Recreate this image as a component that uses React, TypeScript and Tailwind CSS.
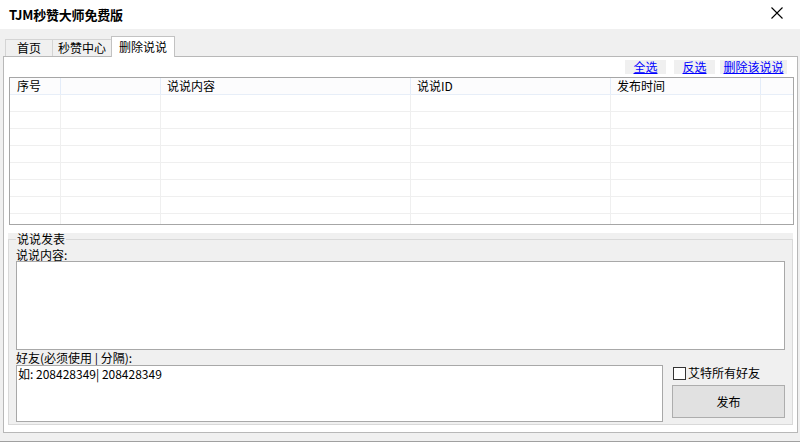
import React from 'react'

const font = { fontFamily: '"Noto Sans CJK SC", "Liberation Sans", sans-serif' }

const rows = Array.from({ length: 8 })

function Cell({ last }: { last?: boolean }) {
  return <div className={last ? '' : 'border-r border-[#efefef]'} />
}

export default function App() {
  return (
    <div className="w-[800px] h-[442px] bg-[#f0f0f0] text-[12px] leading-[14px] text-black overflow-hidden" style={font}>
      {/* title bar */}
      <div className="h-[29px] bg-white flex items-center justify-between pl-[9px] pr-[17px]">
        <span className="text-[13px] font-bold tracking-[-0.2px]">TJM秒赞大师免费版</span>
        <svg width="12" height="12" viewBox="0 0 12 12" className="mb-[4px]">
          <path d="M0.5 0.5 L11.5 11.5 M11.5 0.5 L0.5 11.5" stroke="#000" strokeWidth="1.1" />
        </svg>
      </div>

      <div className="pt-[7px] pl-[3px] pr-[2px]">
        {/* tabs */}
        <div className="flex items-end h-[20px] pl-[2px]">
          <div className="w-[48px] h-[17px] border border-b-0 border-[#d4d4d4] bg-[#f0f0f0] flex items-center justify-center">首页</div>
          <div className="w-[59px] h-[17px] border border-b-0 border-l-0 border-[#d4d4d4] bg-[#f0f0f0] flex items-center justify-center">秒赞中心</div>
          <div className="relative z-10 -ml-[1px] -mb-[1px] w-[64px] h-[21px] border border-b-0 border-[#c2c2c2] bg-white flex items-center justify-center pb-[1px]">删除说说</div>
        </div>

        {/* panel */}
        <div className="h-[377px] border border-[#b8b8b8] bg-white">
          <div className="h-[20px] flex justify-end items-start pt-[3px] pr-[10px] gap-[8px]">
            <a className="w-[41px] h-[14px] bg-[#f0f0f0] text-[#0000ff] underline flex justify-center">全选</a>
            <a className="w-[41px] h-[14px] bg-[#f0f0f0] text-[#0000ff] underline flex justify-center">反选</a>
            <a className="-ml-[3px] w-[67px] h-[14px] bg-[#f0f0f0] text-[#0000ff] underline flex justify-center">删除该说说</a>
          </div>

          {/* list */}
          <div className="ml-[5px] w-[785px] h-[148px] border border-[#a6a6a6] overflow-hidden">
            <div className="grid grid-cols-[51px_100px_250px_200px_150px_1fr] h-[17px] bg-[#fcfcfd] border-b border-[#e7eef8]">
              <div className="pl-[7px] pt-[1px] border-r border-[#e3ecf9]">序号</div>
              <div className="border-r border-[#e3ecf9]" />
              <div className="pl-[6px] pt-[1px] border-r border-[#e3ecf9]">说说内容</div>
              <div className="pl-[6px] pt-[1px] border-r border-[#e3ecf9]">说说ID</div>
              <div className="pl-[6px] pt-[1px] border-r border-[#e3ecf9]">发布时间</div>
              <div />
            </div>
            {rows.map((_, i) => (
              <div key={i} className="grid grid-cols-[51px_100px_250px_200px_150px_1fr] h-[17px] border-b border-[#efefef]">
                <Cell />
                <Cell />
                <Cell />
                <Cell />
                <Cell />
                <Cell last />
              </div>
            ))}
          </div>

          {/* group box */}
          <div className="relative mt-[8px] ml-[4px] w-[785px] h-[192px] bg-[#f0f0f0] pt-[6px]">
            <span className="absolute left-[8px] top-0 px-[1px] bg-[#f0f0f0] leading-[12px]">说说发表</span>
            <div className="h-full border border-[#d9d9d9] pt-[9px] px-[7px]">
              <div className="h-[12px] leading-[12px]">说说内容:</div>
              <div className="h-[89px] border border-[#a8a8a8] bg-white" />
              <div className="h-[15px] pt-[1px]">好友(必须使用 | 分隔):</div>
              <div className="flex gap-[9px]">
                <div className="w-[648px] h-[57px] border border-[#a8a8a8] bg-white pl-[1px] pt-[1px]">如: 208428349| 208428349</div>
                <div className="flex-1 flex flex-col">
                  <label className="flex items-center gap-[2px] h-[14px] mt-[1px] ml-[1px]">
                    <span className="w-[13px] h-[13px] border border-[#333] bg-white" />
                    <span>艾特所有好友</span>
                  </label>
                  <button className="mt-[5px] h-[33px] w-[113px] border border-[#adadad] bg-[#e1e1e1] text-[12px]" style={font}>
                    发布
                  </button>
                </div>
              </div>
            </div>
          </div>
        </div>
      </div>
      <div className="mt-[8px] h-[1px] bg-[#a0a0a0]" />
    </div>
  )
}
